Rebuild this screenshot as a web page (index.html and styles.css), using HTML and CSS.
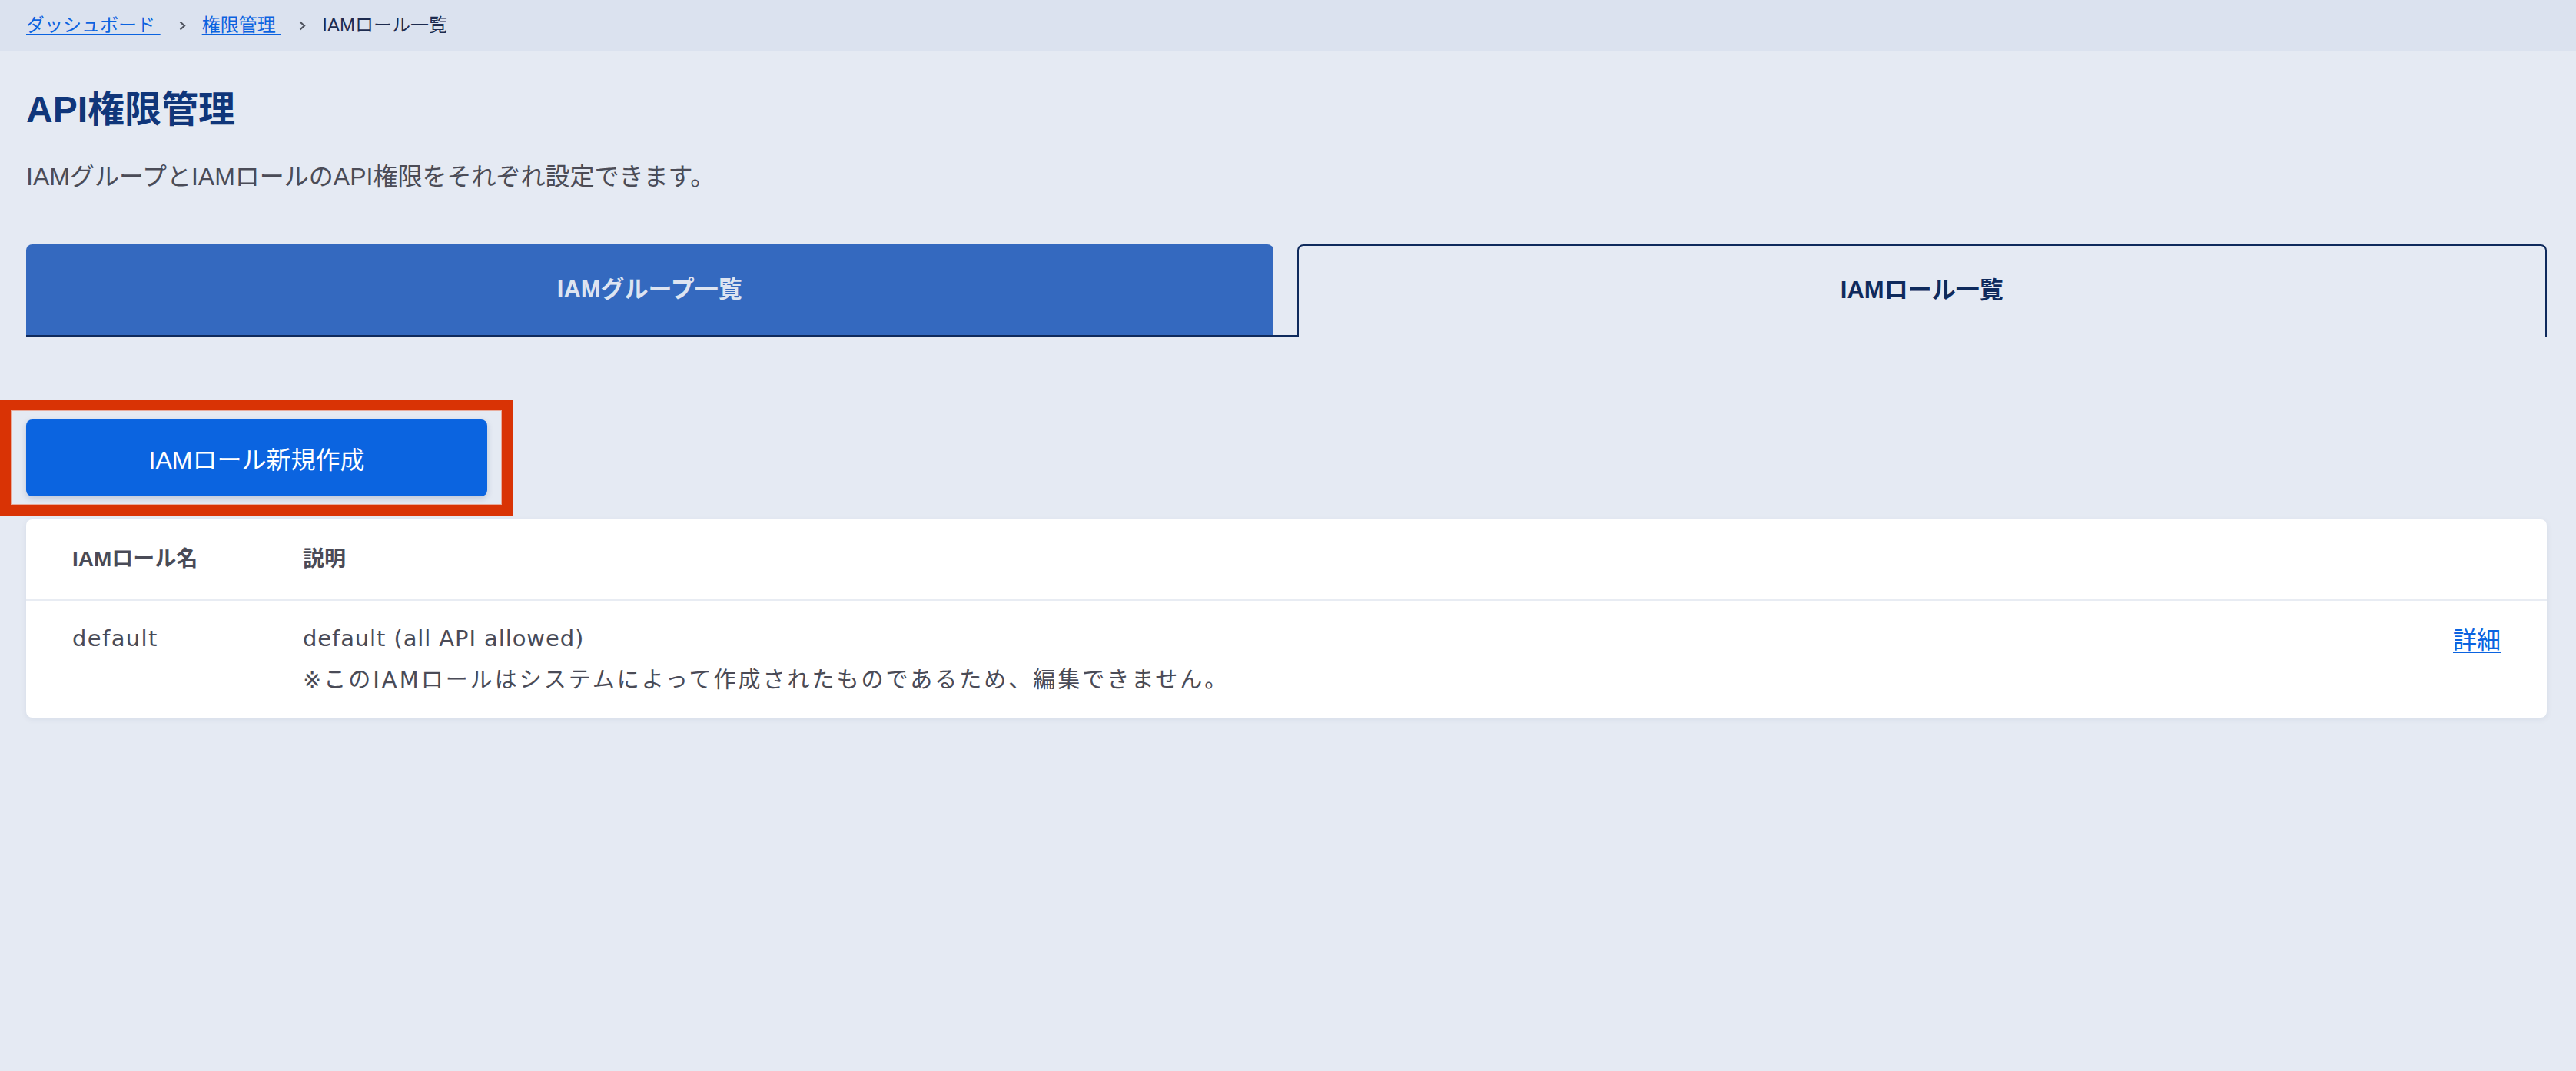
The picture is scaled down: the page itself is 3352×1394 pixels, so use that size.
FILE: index.html
```html
<!DOCTYPE html>
<html lang="ja">
<head>
<meta charset="utf-8">
<title>API権限管理</title>
<link rel="stylesheet" href="styles.css">
</head>
<body>
<nav class="breadcrumb">
  <a class="crumb-link" href="#">ダッシュボード&nbsp;</a>
  <svg class="crumb-sep" width="9" height="13" viewBox="0 0 9 13"><polyline points="1.5,1.5 7,6.5 1.5,11.5" fill="none" stroke="#50545f" stroke-width="2.2"/></svg>
  <a class="crumb-link" href="#">権限管理&nbsp;</a>
  <svg class="crumb-sep" width="9" height="13" viewBox="0 0 9 13"><polyline points="1.5,1.5 7,6.5 1.5,11.5" fill="none" stroke="#50545f" stroke-width="2.2"/></svg>
  <span class="crumb-current">IAMロール一覧</span>
</nav>
<main class="content">
  <h1 class="title">API権限管理</h1>
  <p class="lead">IAMグループとIAMロールのAPI権限をそれぞれ設定できます。</p>
  <div class="tabs">
    <div class="tab tab-inactive">IAMグループ一覧</div>
    <div class="tab-gap"></div>
    <div class="tab tab-active">IAMロール一覧</div>
  </div>
  <div class="actions">
    <button class="btn-primary" type="button">IAMロール新規作成</button>
  </div>
  <div class="card">
    <table class="roles">
      <thead>
        <tr>
          <th class="col-name">IAMロール名</th>
          <th class="col-desc">説明</th>
          <th class="col-action"></th>
        </tr>
      </thead>
      <tbody>
        <tr>
          <td class="col-name">default</td>
          <td class="col-desc"><span class="desc-main">default (all API allowed)</span><br><span class="desc-note">※このIAMロールはシステムによって作成されたものであるため、編集できません。</span></td>
          <td class="col-action"><a class="detail-link" href="#">詳細</a></td>
        </tr>
      </tbody>
    </table>
  </div>
</main>
<div class="highlight"></div>
</body>
</html>
```
FILE: styles.css
```css
* { box-sizing: border-box; }
html, body {
  margin: 0;
  padding: 0;
}
body {
  position: relative;
  min-height: 100vh;
  background: #e5eaf3;
  font-family: "Liberation Sans", "Noto Sans CJK JP", sans-serif;
  color: #4a4b57;
}
.breadcrumb {
  height: 66px;
  background: #dbe2ef;
  display: flex;
  align-items: center;
  padding-left: 34px;
  font-size: 24px;
  line-height: 32px;
}
.crumb-link {
  color: #0b63e0;
  text-decoration: underline;
  text-underline-offset: 3px;
  text-decoration-thickness: 2px;
}
.crumb-sep {
  margin: 0 21px 0 24px;
  display: block;
}
.crumb-current {
  color: #1d2b4f;
}
.content {
  padding: 0 38px 0 34px;
}
.title {
  margin: 41px 0 0;
  font-size: 48px;
  line-height: 72px;
  font-weight: 700;
  color: #10367a;
}
.lead {
  margin: 27px 0 0;
  font-size: 32px;
  line-height: 48px;
  color: #4b4c57;
}
.tabs {
  margin-top: 64px;
  display: flex;
}
.tab {
  flex: 1 1 0;
  height: 120px;
  display: flex;
  align-items: center;
  justify-content: center;
  font-size: 31px;
  font-weight: 700;
  border-radius: 8px 8px 0 0;
  padding-bottom: 7px;
}
.tab-inactive {
  background: #3469bf;
  color: #dde4f1;
  border-bottom: 2px solid #0f2a5c;
}
.tab-gap {
  flex: 0 0 31px;
  height: 120px;
  border-bottom: 2px solid #0f2a5c;
}
.tab-active {
  color: #0f2a5c;
  border: 2px solid #0f2a5c;
  border-bottom: 0;
  padding-bottom: 9px;
}
.actions {
  margin-top: 108px;
}
.btn-primary {
  width: 600px;
  height: 100px;
  border: 0;
  border-radius: 8px;
  background: #0b64e0;
  color: #ffffff;
  font-family: inherit;
  font-size: 32px;
  padding-bottom: 2px;
  box-shadow: 0 3px 8px rgba(20, 40, 90, 0.18);
  cursor: pointer;
}
.card {
  margin-top: 30px;
  background: #ffffff;
  border-radius: 8px;
  box-shadow: 0 2px 8px rgba(20, 40, 90, 0.07);
  overflow: hidden;
}
.roles {
  width: 100%;
  border-collapse: collapse;
}
.roles th {
  text-align: left;
  font-size: 28px;
  font-weight: 700;
  line-height: 54px;
  padding: 25px 0;
  color: #4a4b57;
  border-bottom: 2px solid #e8ecf3;
}
.roles td {
  vertical-align: top;
  font-family: "DejaVu Sans", "Noto Sans CJK JP", sans-serif;
  font-size: 29px;
  line-height: 54px;
  letter-spacing: 1.4px;
  padding: 22px 0;
  color: #4a4b57;
}
.desc-main {
  letter-spacing: 0.9px;
}
.desc-note {
  letter-spacing: 3px;
}
.roles .col-name {
  width: 360px;
  padding-left: 60px;
}
.roles .col-action {
  text-align: right;
  padding-right: 60px;
  letter-spacing: 0;
}
.detail-link {
  font-family: "Noto Sans CJK JP", sans-serif;
  font-size: 31px;
  color: #0b63e0;
  text-decoration: underline;
  text-underline-offset: 4px;
  text-decoration-thickness: 2px;
}
.highlight {
  position: absolute;
  left: 0;
  top: 520px;
  width: 667px;
  height: 151px;
  border: 14px solid #d93305;
  box-shadow: inset 0 0 0 1px #e8ab9c;
  pointer-events: none;
}
```
